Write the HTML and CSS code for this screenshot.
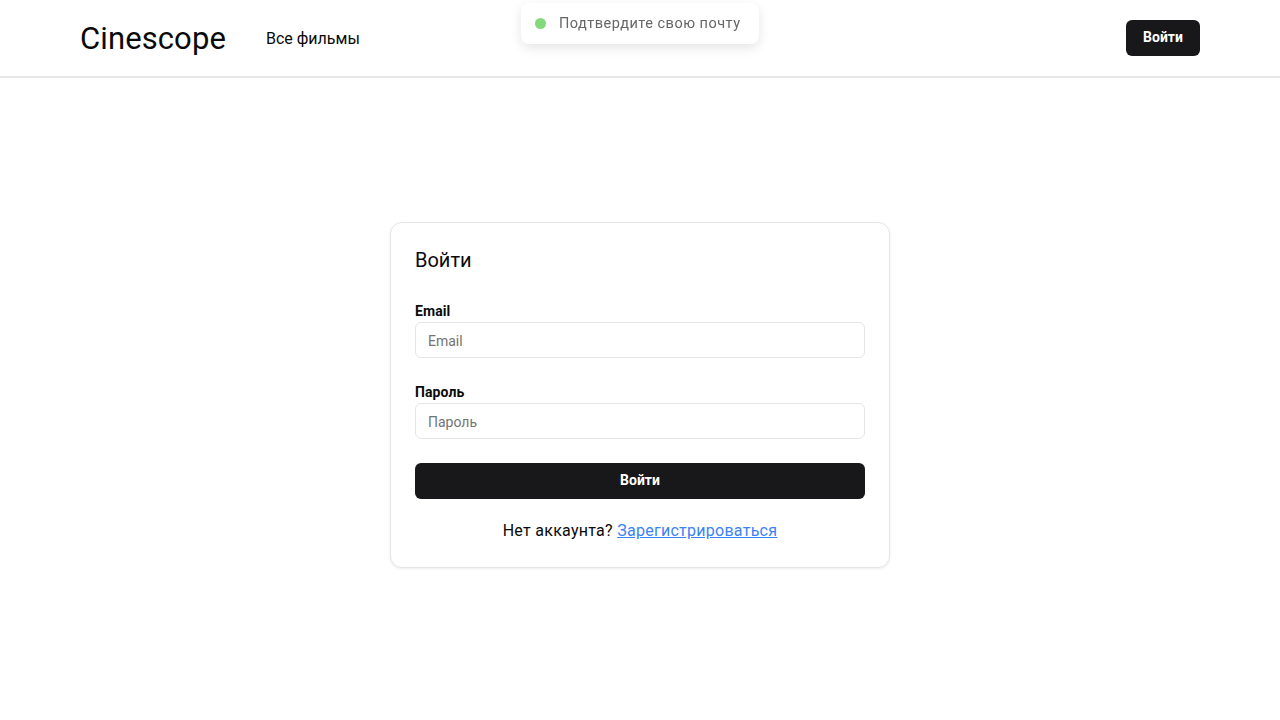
FILE: index.html
```html
<!DOCTYPE html>
<html lang="ru">
<head>
<meta charset="utf-8">
<title>Cinescope</title>
<link rel="stylesheet" href="styles.css">
</head>
<body>
<header class="header">
  <div class="header-inner">
    <div class="header-left">
      <a class="logo" href="#">Cinescope</a>
      <a class="nav-link" href="#">Все фильмы</a>
    </div>
    <button class="btn btn-small">Войти</button>
  </div>
</header>

<div class="toast">
  <span class="toast-dot"></span>
  <span class="toast-text">Подтвердите свою почту</span>
</div>

<main class="main">
  <form class="card">
    <h1 class="card-title">Войти</h1>
    <div class="fields">
      <div class="field">
        <label class="label">Email</label>
        <input class="input" type="email" placeholder="Email">
      </div>
      <div class="field">
        <label class="label">Пароль</label>
        <input class="input" type="password" placeholder="Пароль">
      </div>
      <button class="btn btn-block" type="button">Войти</button>
    </div>
    <p class="footer-text">Нет аккаунта? <a class="link" href="#">Зарегистрироваться</a></p>
  </form>
</main>
</body>
</html>
```

FILE: styles.css
```css
* { box-sizing: border-box; }
html, body { margin: 0; padding: 0; }
body {
  font-family: Roboto, "Noto Sans", sans-serif;
  color: #0a0a0a;
  background: #fff;
  min-height: 720px;
  display: flex;
  flex-direction: column;
}
a { text-decoration: none; color: inherit; }

.header {
  height: 78px;
  border-bottom: 2px solid #e8e8e8;
}
.header-inner {
  max-width: 1120px;
  margin: 0 auto;
  height: 76px;
  display: flex;
  align-items: center;
  justify-content: space-between;
}
.header-left {
  display: flex;
  align-items: center;
  gap: 40px;
}
.logo {
  font-size: 31px;
  font-weight: 400;
  color: #0a0a0a;
  letter-spacing: 0.1px;
}
.nav-link {
  font-size: 16px;
  color: #0a0a0a;
  margin-top: 1px;
}

.btn {
  font-family: inherit;
  background: #18181b;
  color: #fff;
  border: none;
  border-radius: 6px;
  font-weight: 700;
  font-size: 14px;
  line-height: 20px;
  cursor: pointer;
}
.btn-small {
  width: 74px;
  height: 36px;
  padding: 0 0 2px;
}
.btn-block {
  width: 100%;
  height: 36px;
  padding: 0 0 2px;
}

.toast {
  position: fixed;
  top: 3px;
  left: 521px;
  width: 238px;
  height: 41px;
  background: #fff;
  border-radius: 8px;
  box-shadow: 0 4px 12px rgba(0,0,0,0.1);
  display: flex;
  align-items: center;
  padding: 0 14px;
  gap: 13px;
}
.toast-dot {
  width: 11px;
  height: 11px;
  border-radius: 50%;
  background: #86d97a;
  flex: none;
}
.toast-text {
  font-size: 14.5px;
  letter-spacing: 0.5px;
  color: #666;
}

.main {
  flex: 1;
  display: flex;
  align-items: center;
  justify-content: center;
  padding-bottom: 8px;
}
.card {
  width: 500px;
  border: 1px solid #e5e5e5;
  border-radius: 12px;
  padding: 24px;
  box-shadow: 0 1px 3px rgba(0,0,0,0.08);
  background: #fff;
}
.card-title {
  margin: 0 0 26px;
  font-size: 20px;
  line-height: 26px;
  padding-bottom: 2px;
  font-weight: 400;
}
.fields {
  display: flex;
  flex-direction: column;
  gap: 24px;
}
.field {
  display: flex;
  flex-direction: column;
}
.label {
  font-size: 14px;
  line-height: 20px;
  font-weight: 700;
  margin-bottom: 1px;
  letter-spacing: 0.1px;
}
.input {
  font-family: inherit;
  height: 36px;
  border: 1px solid #e5e5e5;
  border-radius: 6px;
  padding: 1px 12px 0;
  font-size: 14px;
  color: #0a0a0a;
  outline: none;
}
.input::placeholder { color: #737373; }
.footer-text {
  margin: 20px 0 0;
  text-align: center;
  font-size: 16px;
  line-height: 24px;
  letter-spacing: 0.27px;
}
.link {
  color: #3b82f6;
  text-decoration: underline;
}
```
